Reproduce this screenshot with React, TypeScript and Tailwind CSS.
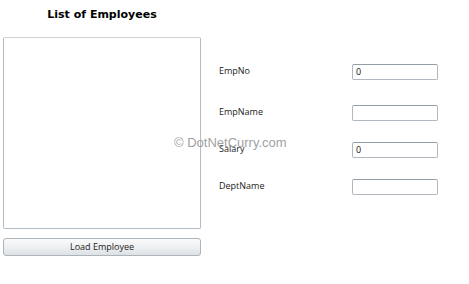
import React from "react";

const fields = [
  { label: "EmpNo", value: "0", mt: "mt-[64px]" },
  { label: "EmpName", value: "", mt: "mt-[25px]" },
  { label: "Salary", value: "0", mt: "mt-[21px]" },
  { label: "DeptName", value: "", mt: "mt-[21px]" },
];

export default function App() {
  return (
    <div className="relative w-[469px] h-[284px] bg-white overflow-hidden flex" style={{ fontFamily: "'Open Sans', 'DejaVu Sans', sans-serif" }}>
      {/* Left: list */}
      <div className="ml-[3px] w-[198px] flex flex-col">
        <h1 className="mt-[6px] h-[18px] text-center text-[11px] font-bold leading-[18px] text-black" style={{ fontFamily: "'DejaVu Sans', Verdana, sans-serif" }}>
          List of Employees
        </h1>
        <div className="mt-[13px] h-[192px] rounded-[2px] border border-[#b4bcc5] border-t-[#cdd2d8] bg-white" />
        <button className="mt-[9px] h-[18px] rounded-[3px] border border-[#adb4bc] bg-gradient-to-b from-[#fafafa] via-[#eef0f2] to-[#dde1e5] text-[9px] leading-[16px] text-[#222]">
          Load Employee
        </button>
      </div>

      {/* Right: form */}
      <div className="ml-[18px] flex flex-col">
        {fields.map((f) => (
          <div key={f.label} className={`${f.mt} flex items-center h-[16px]`}>
            <span className="w-[133px] text-[9px] text-[#222] -mt-[3px]">{f.label}</span>
            <div className="w-[86px] h-[16px] rounded-[2px] border border-[#b0b7bf] border-t-[#959da5] bg-white pl-[3px] text-[9px] leading-[14px] text-[#111]">
              {f.value}
            </div>
          </div>
        ))}
      </div>

      {/* Watermark */}
      <div className="absolute left-[174px] top-[133px] text-[13px] text-[#8a8a8a] opacity-80" style={{ fontFamily: "'Liberation Sans', Arial, sans-serif" }}>
        © DotNetCurry.com
      </div>
    </div>
  );
}
